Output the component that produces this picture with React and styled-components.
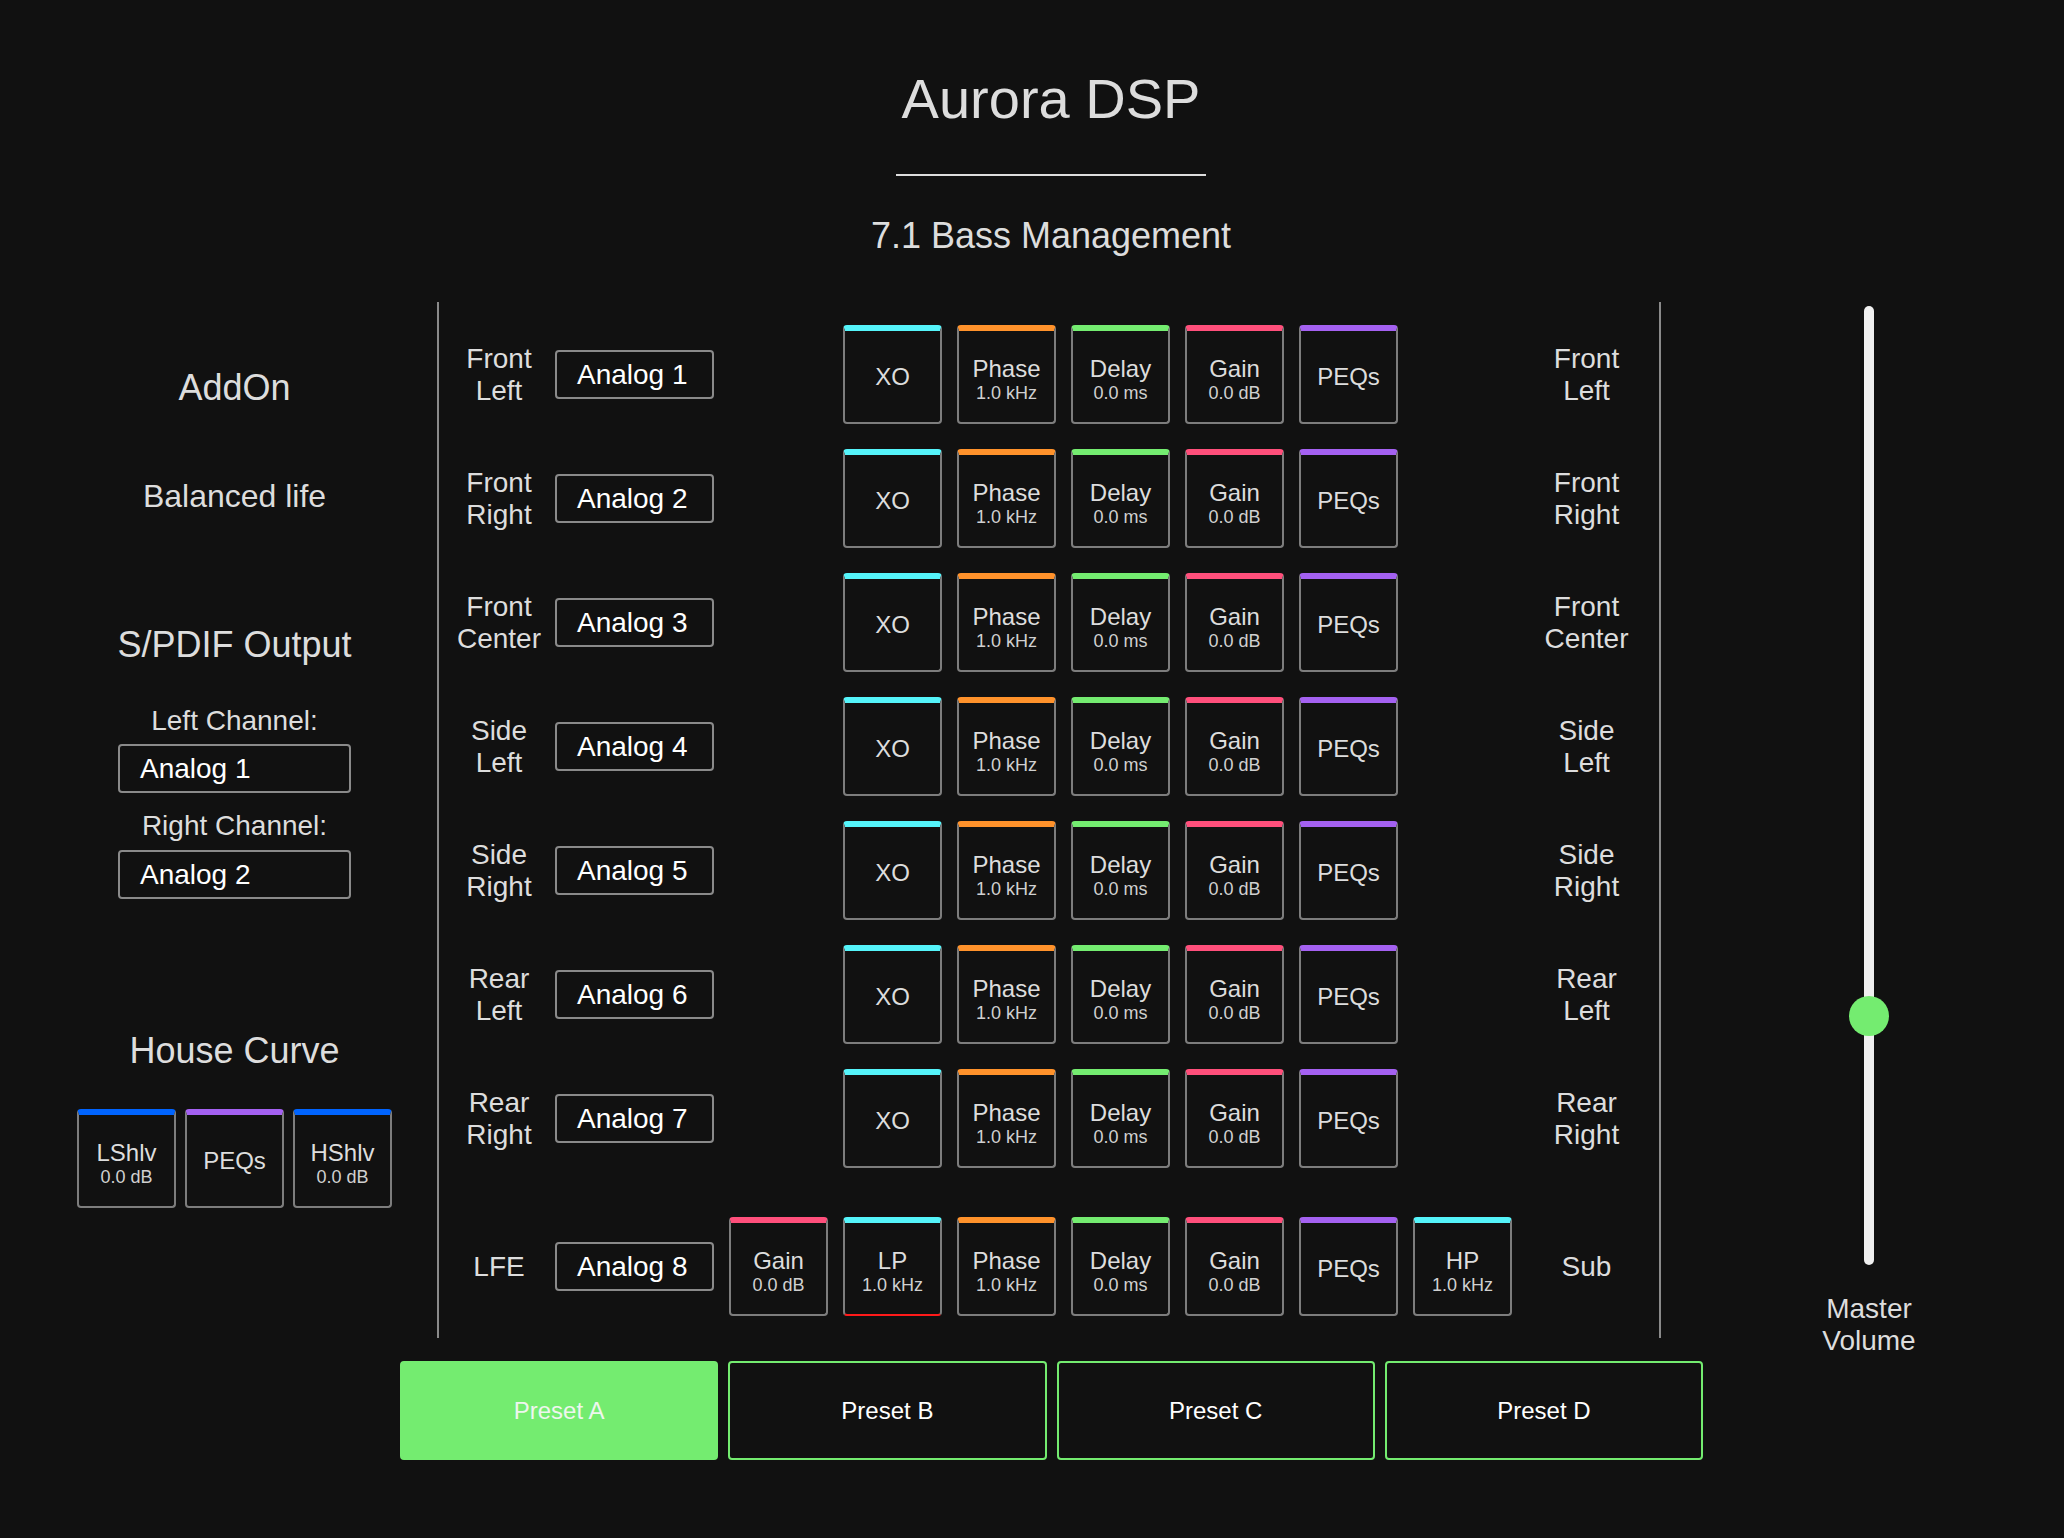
import React from 'react';
import styled, { createGlobalStyle } from 'styled-components';

const GlobalStyle = createGlobalStyle`
  html, body {
    margin: 0;
    padding: 0;
    background: #111111;
  }
  body {
    font-family: "Liberation Sans", Arial, sans-serif;
    color: #dcdcdc;
  }
`;

const COLORS = {
  cyan: '#55f4fa',
  orange: '#ff922b',
  green: '#74ec70',
  pink: '#ff4f7b',
  purple: '#a461f1',
  blue: '#0064ff',
};

const Page = styled.div`
  display: grid;
  grid-template-columns: 437px 1224px 1fr;
  grid-template-rows: 302px auto auto;
  align-content: start;
  min-height: 1538px;
  background: #111111;
`;

const Header = styled.header`
  grid-column: 2;
  grid-row: 1;
  display: flex;
  flex-direction: column;
  align-items: center;
  padding: 66px 0 0 4px;
`;

const Title = styled.h1`
  margin: 0;
  font-size: 56px;
  font-weight: 400;
  line-height: normal;
  color: #dddddd;
`;

const Rule = styled.div`
  width: 310px;
  height: 2px;
  margin-top: 43px;
  background: #dddddd;
`;

const Subtitle = styled.h2`
  margin: 39px 0 0;
  font-size: 36px;
  font-weight: 400;
  line-height: normal;
  color: #dddddd;
`;

/* ---------- Left panel ---------- */
const LeftPanel = styled.aside`
  grid-column: 1;
  grid-row: 2;
  display: flex;
  flex-direction: column;
  align-items: center;
  padding-left: 32px;
`;

const PanelHeading = styled.div`
  margin-top: ${(p) => p.$mt}px;
  font-size: ${(p) => p.$size}px;
  line-height: normal;
  color: #dddddd;
  text-align: center;
`;

const FieldLabel = styled.div`
  margin-top: ${(p) => p.$mt}px;
  font-size: 28px;
  line-height: normal;
  color: #dddddd;
`;

const Select = styled.div`
  box-sizing: border-box;
  display: flex;
  align-items: center;
  width: ${(p) => p.$w}px;
  height: 49px;
  margin-top: ${(p) => p.$mt || 0}px;
  padding-left: 20px;
  border: 2px solid #8a8a8a;
  border-radius: 4px;
  font-size: 28px;
  color: #ffffff;
  flex-shrink: 0;
`;

const CurveTiles = styled.div`
  display: grid;
  grid-template-columns: repeat(3, 99px);
  column-gap: 9px;
  margin-top: 37px;
`;

/* ---------- Tiles ---------- */
const Tile = styled.div`
  box-sizing: border-box;
  width: 99px;
  height: 99px;
  grid-column: ${(p) => p.$slot || 'auto'};
  padding-top: ${(p) => (p.$twoLine ? 5 : 0)}px;
  border: 2px solid #7d7d7d;
  border-top: 6px solid ${(p) => p.$accent};
  border-bottom-color: ${(p) => (p.$alert ? '#ff1a1a' : '#7d7d7d')};
  border-radius: 4px;
  display: flex;
  flex-direction: column;
  align-items: center;
  justify-content: center;
`;

const TileName = styled.span`
  font-size: 24px;
  line-height: normal;
  color: #dddddd;
`;

const TileValue = styled.span`
  font-size: 18px;
  line-height: normal;
  color: #d0d0d0;
`;

/* ---------- Center matrix ---------- */
const Matrix = styled.main`
  grid-column: 2;
  grid-row: 2;
  display: flex;
  flex-direction: column;
  gap: 25px;
  padding: 23px 0 22px;
  border-left: 2px solid #8a8a8a;
  border-right: 2px solid #8a8a8a;
`;

const Row = styled.div`
  display: flex;
  align-items: center;
  margin-top: ${(p) => (p.$lfe ? 24 : 0)}px;
`;

const ChannelLabel = styled.div`
  box-sizing: border-box;
  width: 116px;
  padding-left: 4px;
  flex-shrink: 0;
  font-size: 28px;
  line-height: normal;
  text-align: center;
  color: #dddddd;
`;

const Slots = styled.div`
  display: grid;
  grid-template-columns: repeat(7, 99px);
  column-gap: 15px;
  margin-left: 15px;
  flex-shrink: 0;
`;

const OutLabel = styled.div`
  flex: 1;
  padding-left: 2px;
  font-size: 28px;
  line-height: normal;
  text-align: center;
  color: #dddddd;
`;

/* ---------- Right: master volume ---------- */
const VolumePanel = styled.aside`
  grid-column: 3;
  grid-row: 2 / span 2;
  display: flex;
  flex-direction: column;
  align-items: center;
  padding-left: 13px;
`;

const Track = styled.div`
  position: relative;
  width: 10px;
  height: 959px;
  margin-top: 4px;
  border-radius: 5px;
  background: #f0f0f0;
`;

const Thumb = styled.div`
  position: absolute;
  left: 50%;
  width: 40px;
  height: 40px;
  margin-left: -20px;
  border-radius: 50%;
  background: ${COLORS.green};
`;

const VolumeLabel = styled.div`
  margin-top: 28px;
  font-size: 28px;
  line-height: normal;
  text-align: center;
  color: #dddddd;
`;

/* ---------- Presets ---------- */
const Presets = styled.nav`
  grid-column: 2;
  grid-row: 3;
  display: grid;
  grid-template-columns: repeat(4, 1fr);
  column-gap: 10px;
  margin: 23px -42px 0 -37px;
  align-self: start;
`;

const PresetButton = styled.button`
  box-sizing: border-box;
  height: 99px;
  border: 2px solid ${COLORS.green};
  border-radius: 4px;
  background: ${(p) => (p.$active ? COLORS.green : '#111111')};
  color: ${(p) => (p.$active ? '#eef6ee' : '#ffffff')};
  font-family: "Liberation Sans", Arial, sans-serif;
  font-size: 24px;
  cursor: pointer;
`;

const channels = [
  ['Front', 'Left', 'Analog 1'],
  ['Front', 'Right', 'Analog 2'],
  ['Front', 'Center', 'Analog 3'],
  ['Side', 'Left', 'Analog 4'],
  ['Side', 'Right', 'Analog 5'],
  ['Rear', 'Left', 'Analog 6'],
  ['Rear', 'Right', 'Analog 7'],
];

const standardTiles = [
  { name: 'XO', accent: COLORS.cyan, slot: 2 },
  { name: 'Phase', value: '1.0 kHz', accent: COLORS.orange, slot: 3 },
  { name: 'Delay', value: '0.0 ms', accent: COLORS.green, slot: 4 },
  { name: 'Gain', value: '0.0 dB', accent: COLORS.pink, slot: 5 },
  { name: 'PEQs', accent: COLORS.purple, slot: 6 },
];

const lfeTiles = [
  { name: 'Gain', value: '0.0 dB', accent: COLORS.pink, slot: 1 },
  { name: 'LP', value: '1.0 kHz', accent: COLORS.cyan, slot: 2, alert: true },
  { name: 'Phase', value: '1.0 kHz', accent: COLORS.orange, slot: 3 },
  { name: 'Delay', value: '0.0 ms', accent: COLORS.green, slot: 4 },
  { name: 'Gain', value: '0.0 dB', accent: COLORS.pink, slot: 5 },
  { name: 'PEQs', accent: COLORS.purple, slot: 6 },
  { name: 'HP', value: '1.0 kHz', accent: COLORS.cyan, slot: 7 },
];

const curveTiles = [
  { name: 'LShlv', value: '0.0 dB', accent: COLORS.blue },
  { name: 'PEQs', accent: COLORS.purple },
  { name: 'HShlv', value: '0.0 dB', accent: COLORS.blue },
];

const presets = ['Preset A', 'Preset B', 'Preset C', 'Preset D'];

function DspTile({ t }) {
  return (
    <Tile $accent={t.accent} $slot={t.slot} $alert={t.alert} $twoLine={!!t.value}>
      <TileName>{t.name}</TileName>
      {t.value && <TileValue>{t.value}</TileValue>}
    </Tile>
  );
}

const TRACK_H = 959;
const THUMB = 40;
const volume = 0.26;

export default function App() {
  const thumbTop = (1 - volume) * TRACK_H - THUMB / 2;
  return (
    <>
      <GlobalStyle />
      <Page>
        <Header>
          <Title>Aurora DSP</Title>
          <Rule />
          <Subtitle>7.1 Bass Management</Subtitle>
        </Header>

        <LeftPanel>
          <PanelHeading $mt={65} $size={36}>AddOn</PanelHeading>
          <PanelHeading $mt={69} $size={32}>Balanced life</PanelHeading>
          <PanelHeading $mt={109} $size={36}>S/PDIF Output</PanelHeading>
          <FieldLabel $mt={39}>Left Channel:</FieldLabel>
          <Select $w={233} $mt={7}>Analog 1</Select>
          <FieldLabel $mt={17}>Right Channel:</FieldLabel>
          <Select $w={233} $mt={8}>Analog 2</Select>
          <PanelHeading $mt={131} $size={36}>House Curve</PanelHeading>
          <CurveTiles>
            {curveTiles.map((t) => (
              <DspTile key={t.name} t={t} />
            ))}
          </CurveTiles>
        </LeftPanel>

        <Matrix>
          {channels.map(([a, b, input]) => (
            <Row key={input}>
              <ChannelLabel>
                {a}
                <br />
                {b}
              </ChannelLabel>
              <Select $w={159}>{input}</Select>
              <Slots>
                {standardTiles.map((t) => (
                  <DspTile key={t.name} t={t} />
                ))}
              </Slots>
              <OutLabel>
                {a}
                <br />
                {b}
              </OutLabel>
            </Row>
          ))}
          <Row $lfe>
            <ChannelLabel>LFE</ChannelLabel>
            <Select $w={159}>Analog 8</Select>
            <Slots>
              {lfeTiles.map((t) => (
                <DspTile key={t.slot} t={t} />
              ))}
            </Slots>
            <OutLabel>Sub</OutLabel>
          </Row>
        </Matrix>

        <VolumePanel>
          <Track>
            <Thumb style={{ top: `${thumbTop}px` }} />
          </Track>
          <VolumeLabel>
            Master
            <br />
            Volume
          </VolumeLabel>
        </VolumePanel>

        <Presets>
          {presets.map((p, i) => (
            <PresetButton key={p} $active={i === 0}>
              {p}
            </PresetButton>
          ))}
        </Presets>
      </Page>
    </>
  );
}
